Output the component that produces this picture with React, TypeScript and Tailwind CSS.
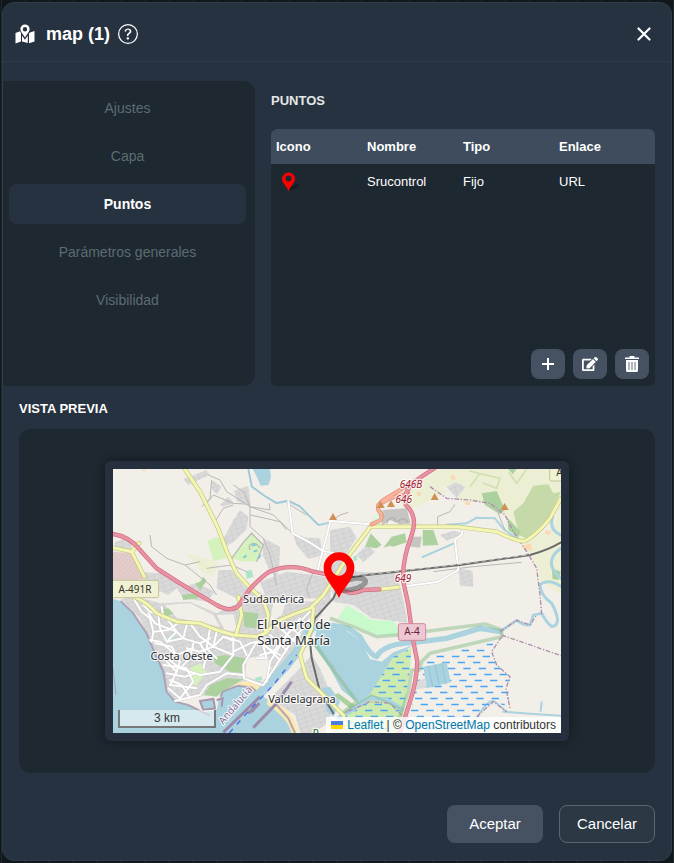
import { useState } from "react";
import { BsQuestionCircle } from "react-icons/bs";
import { FaEdit } from "react-icons/fa";

const TABS = ["Ajustes", "Capa", "Puntos", "Parámetros generales", "Visibilidad"];

const COLUMNAS = ["Icono", "Nombre", "Tipo", "Enlace"];

const PUNTOS = [{ nombre: "Srucontrol", tipo: "Fijo", enlace: "URL" }];

const ZONAS_URBANAS = [
    "M62 432L110 425 180 445 270 440 350 475 420 440 450 400 520 430 640 440 700 425 650 500 610 560 500 690 430 685 370 710 225 740 200 700 165 590 120 490Z",
    "M365 262L400 195 420 165 445 185 440 222 400 262 380 272Z",
    "M335 75L365 95 350 118 332 100Z",
    "M250 72L320 45 328 60 265 90Z",
    "M402 108L445 92 452 148 412 140Z",
    "M360 150L385 125 402 145 370 155Z",
    "M580 240L625 248 660 250 668 300 625 312 590 270Z",
    "M490 250L540 275 538 330 530 370 505 340 488 300Z",
    "M355 345L395 345 430 390 478 430 440 445 400 425 350 400Z",
    "M130 352L185 355 240 392 205 420 170 405 130 400Z",
    "M230 398L290 385 345 410 320 440 250 430Z",
    "M45 262L75 250 100 268 90 284 45 280Z",
    "M480 380L560 350 640 360 700 370 690 430 500 430Z",
    "M690 225L750 215 770 248 740 295 690 300Z",
    "M690 320L730 310 770 350 890 355 912 440 922 503 880 498 815 490 760 450 700 440Z",
    "M1020 240L1060 228 1092 235 1040 257Z",
    "M1075 340L1118 348 1120 395 1080 392Z",
    "M1040 97L1068 82 1096 97 1070 128Z",
    "M770 300L800 270 825 290 790 322Z",
    "M590 650L635 600 660 640 690 710 690 800 640 834 600 834 585 780 510 730Z",
];

const PARQUES = [
    "M175 465L205 460 220 475 200 485Z",
    "M430 470L475 475 470 520 432 515Z",
    "M340 605L375 600 437 610 432 655 390 650 345 625Z",
    "M312 720L330 690 380 670 430 672 365 712 350 725Z",
    "M285 385L300 380 310 365 320 378 300 405Z",
    "M245 420L290 415 295 430 250 435Z",
    "M795 275L812 235 845 270 830 280Z",
    "M850 278L875 245 915 235 920 262 880 275 870 272Z",
    "M968 225L1000 225 1015 270 968 272Z",
    "M1145 115L1190 108 1215 165 1200 178 1155 150Z",
    "M1222 188L1262 230 1255 248 1225 225Z",
    "M1225 42L1250 42 1238 58Z",
    "M1355 340L1383 350 1375 375 1358 372Z",
    "M700 720L715 715 770 755 750 760Z",
];

const CALLES = [
    "M565 138L578 235 625 260 668 287 700 295",
    "M690 203L668 287 652 350",
    "M690 198L810 208",
    "M895 397L1015 380 1075 345 1065 255 1086 238 1088 222",
    "M100 430L125 470 150 490 160 530 155 560",
    "M145 475L165 505 230 530 250 550 300 565 330 550",
    "M175 480L180 520 200 560 250 550 260 510",
    "M270 505L300 545 340 575 370 545 395 555",
    "M165 530L205 525 240 500",
    "M400 545L400 600 360 650 300 660 240 640 190 600",
    "M330 520L320 580 350 610",
    "M190 630L260 640 280 680 240 730 205 700",
    "M200 620L230 650 210 690 290 700",
    "M225 738L300 720 320 690 380 655 430 660",
    "M470 560L430 630 432 670 485 690",
    "M400 590L450 565 470 560 540 600",
    "M630 470L560 540 510 620 500 680",
    "M600 490L520 590 480 600",
    "M640 480L575 560 490 690",
    "M510 540L560 585",
    "M485 560L540 615",
    "M530 510L585 560",
    "M550 500L600 540",
    "M480 540L500 610 470 610",
    "M150 555L180 560 230 600 280 580",
    "M205 555L230 530 200 490",
    "M165 565L215 575 240 620 230 650",
    "M280 565L270 610 240 640",
    "M300 565L320 600 310 640",
    "M340 575L300 590 260 580",
    "M190 490L185 455",
    "M350 530L340 575 400 600",
    "M200 655L255 665 285 655",
    "M210 675L245 690 270 730",
    "M370 545L420 560 440 600",
    "M130 450L150 470 190 480",
];

const SENDEROS = [
    "M150 240L155 275 200 310 255 330 300 320",
    "M325 60L360 75 380 110 450 155 520 180 578 235",
    "M320 145L340 120 400 145 450 148",
    "M400 90L430 110 450 155 510 165 508 145",
    "M450 155L450 215 490 250 510 300 530 390",
    "M452 180L540 200 560 225",
    "M345 200L370 160 400 150",
    "M570 150L620 180",
    "M690 200L720 180 745 172",
    "M1013 210L1013 185 1050 170 1065 148",
    "M1185 145L1200 190 1215 225",
    "M1000 350L1120 335 1265 322",
    "M255 330L330 390 350 420",
    "M305 155L330 130 335 75",
    "M320 340L395 330 440 350",
    "M640 350L620 400 630 430",
    "M690 620L740 705",
];

const CARRETERAS = [
    "M250 36L300 110 350 210 385 300 410 355 450 398 490 435 505 480 495 535",
    "M39 278L95 290 118 264",
    "M95 290L133 365",
    "M100 425Q140 440 170 475L230 500 300 505 350 525 400 540 470 545 500 532 530 500 580 478 630 460 670 420 715 350 740 310 812 215 930 215 1070 215 1190 230Q1255 262 1275 258 1310 240 1350 190L1383 130",
    "M415 425L425 480 408 540",
    "M640 460L635 520 600 600 620 670 680 730 730 780 745 834",
    "M838 403L895 397",
];

const AUTOVIAS = [
    "M39 237Q90 245 120 285L170 340 240 385 350 450Q405 480 425 438L450 402Q480 370 505 352 570 322 640 350L700 362 720 400Q750 425 790 405L838 403",
    "M1005 38L950 75Q905 110 918 150 955 185 935 240 905 320 910 380L925 450 940 560 952 620Q950 680 930 740L900 834",
];

const MONTES = [[699, 185], [842, 149], [873, 146], [1004, 125], [1214, 155]];

const FILAS_MARISMA = Array.from({ length: 16 }, (_, i) => ({ y: 568.5 + i * 18, salto: (i * 29) % 46 }));

// Drawing units are a third of a CSS pixel.
function Mapa() {
    return (
        <svg viewBox="39 42 1344 792" className="block h-auto w-full" role="img" aria-label="Mapa">
            <defs>
                <pattern id="manzanas" width="20" height="14" patternUnits="userSpaceOnUse" patternTransform="rotate(-18)">
                    <rect width="20" height="14" fill="#dad9d9" />
                    <path d="M0 0H20M0 0V14" stroke="#c3c2c2" strokeWidth="2" />
                </pattern>
                <clipPath id="marisma">
                    <path d="M935 578L880 605 812 715 740 775 700 834H890L915 740 930 640ZM970 610L1180 562 1175 590 1190 630 1230 665 1225 760 1190 740 1130 790 1100 834H910L940 740 955 650Z" />
                </clipPath>
                <pattern id="militar" width="10" height="10" patternUnits="userSpaceOnUse" patternTransform="rotate(45)">
                    <rect width="10" height="10" fill="#e3cdcb" />
                    <path d="M0 0V10" stroke="#d6bcbc" strokeWidth="3" />
                </pattern>
            </defs>
            <rect x="39" y="42" width="1344" height="792" fill="#f2efe9" />

            <g fill="#ecefd3">
                <path d="M1000 42H1383V160L1290 250 1262 256 1215 180 1150 145 1085 140 1040 97 990 90Z" />
                <path d="M890 130L990 62 1042 112 920 168 905 150Z" />
                <path d="M1268 262L1350 225 1383 160V420L1322 380 1310 330Z" />
                <path d="M252 292L355 322 340 366 305 350Z" />
            </g>
            <path d="M1258 240L1240 170 1270 145 1300 92 1345 88 1360 115 1383 110 1345 190 1280 252Z" fill="#c5daa8" />
            <path d="M1108 48L1200 70 1190 100 1150 85M1225 50L1250 85 1280 42M1140 55L1110 95" fill="none" stroke="#d2dfb2" strokeWidth="5" />
            <path d="M1052 62L1062 58 1068 72 1056 76ZM1095 140H1110V150H1095ZM1335 225L1352 228 1350 240 1336 236ZM950 112L964 110 962 124 952 122ZM1266 272L1292 265 1298 285 1275 288ZM122 44L140 42 134 50Z" fill="#fbd9b6" />
            <path d="M39 290L95 295 132 368 100 395 39 400Z" fill="url(#militar)" />
            <path d="M322 258L350 245 372 262 378 310 340 318ZM395 310L430 262 455 232 488 268 470 318 430 320Z" fill="#d5f2bd" />
            <path d="M812 205L835 165 850 195 840 208Z" fill="#dbf7e0" />

            <g fill="url(#manzanas)">
                {ZONAS_URBANAS.map((d) => <path key={d} d={d} />)}
            </g>
            <g fill="#f2efe9">
                <path d="M195 450L270 445 340 480 360 515 290 500 230 488Z" />
                <path d="M440 610L500 600 515 640 490 680 436 665Z" />
                <path d="M350 480L400 478 412 530 375 525Z" />
                <path d="M520 440L560 435 545 480 510 500Z" />
                <path d="M655 620L690 640 725 700 690 700Z" />
            </g>
            <path d="M848 165L920 160 932 205 900 208 870 195 845 212ZM935 245L965 245 960 278 920 274Z" fill="#c6c5c4" />
            <path d="M860 205C865 185 885 185 888 200M895 203C900 185 920 190 925 205" fill="none" stroke="#b0afae" strokeWidth="4" />

            <g fill="#add19e">
                {PARQUES.map((d) => <path key={d} d={d} />)}
            </g>
            <path d="M270 640L300 625 320 650 290 690 272 690Z" fill="#d5f2bd" />
            <path d="M740 450L815 495 880 498 905 540 830 538 714 490Z" fill="#c8facc" />
            <path d="M437 348L455 345 460 365 440 372ZM205 545L220 543 222 555 208 558ZM760 305L770 300 772 315 760 318ZM465 668L485 664 488 675 468 678Z" fill="#aee4c8" />

            <g fill="#aad3df">
                <path d="M39 432L62 438 100 475 140 535 165 595 190 650 200 710 225 740 265 750 310 772 350 765 362 715 415 692 455 697 485 722 530 750 565 790 585 834H39Z" />
                <path d="M458 42H510L513 68 505 90 482 92 472 68Z" />
                <path d="M650 525L690 518 735 525 780 555 810 612 845 620 880 592 940 570 880 610 815 715 775 745 725 705 690 640 640 570Z" />
                <path d="M664 700L690 695 720 740 700 785 680 770Z" />
            </g>
            <path d="M400 692Q440 665 490 690L478 718Q440 690 400 692ZM505 728L560 765Q592 800 594 834H574Q565 790 500 748Z" fill="#fbe9b4" />
            <path d="M300 738L340 732 345 760 310 765ZM350 735L368 730 365 755" fill="#aad3df" stroke="#a894ab" strokeWidth="6" />
            <path d="M62 438L100 475 140 535 165 595 190 650 200 710 225 740 265 750 330 782M362 725L368 710 415 692 455 697 485 722M530 750L565 790 585 834" fill="none" stroke="#a894ab" strokeWidth="6" strokeOpacity="0.8" />
            <path d="M39 640L48 720" stroke="#a9a1c0" strokeWidth="3" />

            <g fill="none" stroke="#aad3df" strokeLinejoin="round" strokeLinecap="round">
                <path d="M425 790L480 715 560 630 610 565 635 510" strokeWidth="28" />
                <path d="M640 520L700 512 745 520 780 545Q810 600 830 605 850 565 945 562L1040 550 1140 520 1200 530" strokeWidth="16" />
                <path d="M1200 530L1250 496Q1272 512 1290 510L1300 480 1325 475" strokeWidth="8" />
                <path d="M445 42L455 95 490 120 530 145 565 138 600 155 655 210 690 203M1040 209L1100 205 1130 188 1185 190 1210 222 1250 250M968 306L1060 266M1210 770L1270 775 1383 782M1325 742L1322 768M1130 790Q1170 720 1190 745L1220 770" strokeWidth="6" />
                <path d="M1358 185Q1345 225 1383 240M1383 280Q1325 320 1383 370M1383 395Q1350 370 1320 388 1320 420 1355 445 1390 510 1355 515 1338 500 1325 475" strokeWidth="9" />
            </g>
            <path d="M445 45L457 95 492 122 530 143 565 136 600 153 655 208" fill="none" stroke="#8fb8c9" strokeWidth="2" />

            <path d="M935 578L880 605 812 715 740 775 700 834H900L915 740 930 640Z" fill="#cdebb0" />
            <g clipPath="url(#marisma)" stroke="#4aa3f5" strokeWidth="4" strokeDasharray="22 24">
                {FILAS_MARISMA.map(({ y, salto }) => (
                    <path key={y} d={`M700 ${y}H1240`} strokeDashoffset={salto} />
                ))}
            </g>
            <path d="M970 635L1040 622 1052 682 980 700Z" fill="#aad3df" />
            <path d="M945 680L975 670 978 698 940 705Z" fill="#dcdbdb" />
            <path d="M985 633L998 697M1005 628L1018 692M1025 625L1038 688" stroke="#93c5d5" strokeWidth="3" />
            <path d="M710 795L810 728 860 735 910 765" fill="none" stroke="#aad3df" strokeWidth="14" />

            <g fill="none" stroke="#7fb77f" strokeOpacity="0.45" strokeWidth="11" strokeLinejoin="round">
                <path d="M690 490L760 515 830 545 890 540 1155 507 1205 525 1205 545 990 595 965 620 958 645H935L925 710 900 785 890 834" />
                <path d="M640 560L700 645 770 740 720 780" />
                <path d="M735 770L815 720 900 760" strokeWidth="5" />
            </g>
            <path d="M370 832L480 725M445 775L478 745 455 770M460 818L525 750 575 680" fill="none" stroke="#9c8bab" strokeWidth="9" />
            <path d="M388 834L440 775 520 690 590 600" fill="none" stroke="#4d6df0" strokeWidth="4" strokeDasharray="16 18" />

            <g fill="none" stroke="#b08fae" strokeWidth="4" strokeDasharray="14 5 4 5">
                <path d="M990 95L1040 130 1110 135 1170 145 1215 180 1240 230 1280 290 1310 340 1320 420 1325 480" />
                <path d="M1205 540L1383 602M1205 545L1175 590 1190 630 1230 665 1218 700 1230 760M720 780L810 740 870 745 905 780M1200 530L1250 496 1290 510 1310 480M1130 785L1180 740 1220 770" />
            </g>

            <g fill="none" stroke="#bab9b8" strokeWidth="3">
                {SENDEROS.map((d) => <path key={d} d={d} />)}
            </g>
            <path d="M395 310L430 262 455 235 490 270 470 320M450 285C440 260 470 260 480 280" fill="none" stroke="#bab9b8" strokeWidth="4" />
            <path d="M455 272L470 268M430 308L440 302M460 290L472 286M475 310L482 300" stroke="#80c8d8" strokeWidth="6" />

            <g fill="none" strokeLinejoin="round" strokeLinecap="round">
                <g stroke="#c9c8c8" strokeWidth="8">
                    {CALLES.map((d) => <path key={d} d={d} />)}
                </g>
                <g stroke="#ffffff" strokeWidth="6">
                    {CALLES.map((d) => <path key={d} d={d} />)}
                </g>
                <path d="M730 370L800 360 1080 330 1290 300Q1345 285 1383 262M725 375L700 430 645 490 628 540 635 610 660 710 700 775" stroke="#6b6b6b" strokeWidth="6" />
                <path d="M740 366L1080 328 1290 299" stroke="#e8e6e4" strokeWidth="2" strokeDasharray="14 10" strokeLinecap="butt" />
                <g stroke="#c3c67e" strokeWidth="13">
                    {CARRETERAS.map((d) => <path key={d} d={d} />)}
                </g>
                <g stroke="#f4f7b4" strokeWidth="9">
                    {CARRETERAS.map((d) => <path key={d} d={d} />)}
                </g>
                <path d="M815 208L842 195Q850 180 835 165 830 150 850 135L900 105 940 80M835 150L870 130 925 115" stroke="#e08a6c" strokeWidth="12" />
                <path d="M815 208L842 195Q850 180 835 165 830 150 850 135L900 105 940 80M835 150L870 130 925 115" stroke="#fab29c" strokeWidth="8" />
                <g stroke="#cf6e85" strokeWidth="13">
                    {AUTOVIAS.map((d) => <path key={d} d={d} />)}
                </g>
                <g stroke="#e892a2" strokeWidth="9">
                    {AUTOVIAS.map((d) => <path key={d} d={d} />)}
                </g>
            </g>
            <g fill="#d08f55">
                {MONTES.map(([x, y]) => <path key={x} d={`M${x - 12} ${y + 10}L${x} ${y - 11}L${x + 12} ${y + 10}Z`} />)}
            </g>

            <g strokeWidth="3">
                <rect x="20" y="376" width="156" height="52" rx="6" fill="#f1f2d3" stroke="#c3c49a" />
                <rect x="1349" y="20" width="60" height="58" rx="6" fill="#f1f2d3" stroke="#c3c49a" />
                <rect x="895" y="506" width="82" height="50" rx="6" fill="#edc8d2" stroke="#cf8a9b" />
            </g>
            <g className="font-['Noto_Sans',sans-serif]" textAnchor="middle" fill="#35352f" fontSize="30">
                <text x="105" y="413">A-491R</text>
                <text x="1378" y="64">A</text>
                <text x="936" y="541" fill="#6b1d3a">A-4</text>
                <g stroke="#ffffff" strokeOpacity="0.75" strokeWidth="7" strokeLinejoin="round" paintOrder="stroke" fill="#2d2d2d">
                    <text x="521" y="444" fontSize="33">Sudamérica</text>
                    <text x="581" y="521" fontSize="39">El Puerto de</text>
                    <text x="581" y="570" fontSize="39">Santa María</text>
                    <text x="245" y="614" fontSize="33">Costa Oeste</text>
                    <text x="606" y="743" fontSize="33">Valdelagrana</text>
                    <text x="647" y="846" fill="#1b6b1b" fontSize="30">P</text>
                    <g fill="#a3202f" fontStyle="italic" fontSize="30">
                        <text x="933" y="99">646B</text>
                        <text x="911" y="143">646</text>
                        <text x="909" y="382">649</text>
                    </g>
                    <text transform="translate(414 757) rotate(-50)" fill="#8c7099" fontSize="30">Andalucía</text>
                </g>
            </g>

            <ellipse cx="755" cy="388" rx="43" ry="15" fill="none" stroke="#000000" strokeOpacity="0.3" strokeWidth="15" transform="rotate(-14 755 388)" />
            <path fillRule="evenodd" fill="#ff0000" d="M717 429C703 395 671 375 671 338A46 46 0 0 1 763 338C763 375 731 395 717 429ZM717 316A23 23 0 1 0 717 362A23 23 0 1 0 717 316Z" />
        </svg>
    );
}

function IconoMapa() {
    return (
        <svg width="20" height="20" viewBox="0 0 20 20" fill="currentColor" className="shrink-0" aria-hidden="true">
            <path fillRule="evenodd" d="M10 0.500A4.600 4.600 0 0 1 14.600 5.100C14.600 8 12 10 10 13.500C8 10 5.400 8 5.400 5.100A4.600 4.600 0 0 1 10 0.500ZM10 3A2.200 2.200 0 1 0 10 7.400A2.200 2.200 0 1 0 10 3Z" />
            <path d="M0.500 9L5 7.200 6 9V17.500L0.500 19.500ZM7 11.500L9.900 15.800 12.800 11.500V19L7 17.500ZM14 9.500L15 8.500 19.500 7V17.500L14 19.300Z" />
        </svg>
    );
}

function IconoPapelera() {
    return (
        <svg width="14" height="16" viewBox="0 0 14 16" aria-hidden="true">
            <path fill="currentColor" d="M4.500 0H9.500V1.500H14V3H0V1.500H4.500ZM1 4H13V14.500A1.500 1.500 0 0 1 11.500 16H2.500A1.500 1.500 0 0 1 1 14.500Z" />
            <path stroke="#939ca6" strokeWidth="1.500" d="M4 6V14M7 6V14M10 6V14" />
        </svg>
    );
}

function IconoPunto() {
    return (
        <svg width="24" height="22" viewBox="0 0 24 22" aria-hidden="true">
            <path d="M7 20C11 14 18 12 18 14S13 18 7 20Z" fill="#141b21" />
            <path fillRule="evenodd" fill="#ff0000" d="M7.500 20.500C6 15 1 12 1 8A6.500 6.500 0 0 1 14 8C14 12 9 15 7.500 20.500ZM7.500 4.500A3 3 0 1 0 7.500 10.500A3 3 0 1 0 7.500 4.500Z" />
        </svg>
    );
}

export default function App() {
    const [tab, setTab] = useState("Puntos");

    return (
        <div className="min-h-screen bg-[#11181c] bg-[repeating-linear-gradient(90deg,transparent_0_1px,#20282d_1px_2px,transparent_2px_24px)] p-[2px] pb-[3px] font-['Liberation_Sans',Arial,sans-serif] text-white">
            <div role="dialog" aria-labelledby="titulo" className="rounded-xl border border-[#303c4a] bg-[#273240]">
                <header className="flex h-[59px] items-center border-b border-[#2f3b49] pt-[3px] pr-5 pl-3">
                    <IconoMapa />
                    <h1 id="titulo" className="ml-[11px] text-lg leading-6 font-bold">map (1)</h1>
                    <button type="button" aria-label="Ayuda" className="ml-2"><BsQuestionCircle className="size-5" /></button>
                    <button type="button" aria-label="Cerrar" className="ml-auto">
                        <svg width="14" height="14" viewBox="0 0 14 14" stroke="currentColor" strokeWidth="2.200" strokeLinecap="round">
                            <path d="M1.500 1.500L12.500 12.500M12.500 1.500L1.500 12.500" />
                        </svg>
                    </button>
                </header>

                <div className="mt-[19px] flex min-h-[305px] gap-4 pr-4">
                    <nav className="flex w-[252px] shrink-0 flex-col gap-2 rounded-r-xl bg-[#1e2830] py-[7px] pr-[9px] pl-[6px]">
                        {TABS.map((nombre) => (
                            <button
                                key={nombre}
                                type="button"
                                onClick={() => setTab(nombre)}
                                className={`h-10 rounded-lg text-sm ${nombre === tab ? "bg-[#273240] font-bold text-white" : "text-[#5d6b74]"}`}
                            >
                                {nombre}
                            </button>
                        ))}
                    </nav>

                    <section className="flex min-w-0 flex-1 flex-col">
                        <h2 className="pt-3 text-[13px] leading-4 font-bold text-[#e4e6e8]">PUNTOS</h2>
                        <div className="mt-5 flex flex-1 flex-col overflow-hidden rounded-md bg-[#1e2830]">
                            <table className="w-full table-fixed text-left text-[13px]">
                                <thead className="bg-[#3e4c5e]">
                                    <tr className="h-[35px]">
                                        {COLUMNAS.map((columna) => (
                                            <th key={columna} className="font-bold first:pl-[5px]">{columna}</th>
                                        ))}
                                    </tr>
                                </thead>
                                <tbody>
                                    {PUNTOS.map((punto) => (
                                        <tr key={punto.nombre} className="h-[35px]">
                                            <td className="pl-[10px]"><IconoPunto /></td>
                                            <td>{punto.nombre}</td>
                                            <td>{punto.tipo}</td>
                                            <td>{punto.enlace}</td>
                                        </tr>
                                    ))}
                                </tbody>
                            </table>
                            <div className="mt-auto flex justify-end gap-2 p-[6px] pb-[7px]">
                                <button type="button" aria-label="Añadir" className="flex h-[30px] w-[34px] items-center justify-center rounded-lg bg-[#465262]">
                                    <svg width="12" height="12" viewBox="0 0 12 12" stroke="currentColor" strokeWidth="2">
                                        <path d="M6 0V12M0 6H12" />
                                    </svg>
                                </button>
                                <button type="button" aria-label="Editar" className="flex h-[30px] w-[34px] items-center justify-center rounded-lg bg-[#465262]"><FaEdit className="size-4" /></button>
                                <button type="button" aria-label="Eliminar" className="flex h-[30px] w-[34px] items-center justify-center rounded-lg bg-[#465262]"><IconoPapelera /></button>
                            </div>
                        </div>
                    </section>
                </div>

                <section className="px-4 pt-[15px]">
                    <h2 className="text-[13px] leading-4 font-bold">VISTA PREVIA</h2>
                    <div className="mt-3 flex justify-center rounded-xl bg-[#1e2830] py-8">
                        <div className="w-full max-w-[464px] rounded-md bg-[#252f3d] p-2 shadow-[0_0_12px_rgba(0,0,0,0.4)]">
                            <div className="relative overflow-hidden text-xs text-[#333]">
                                <Mapa />
                                <div className="absolute bottom-[5px] left-[5px] h-[18px] w-[98px] border-2 border-t-0 border-[#777] bg-white/50 text-center leading-4">3 km</div>
                                <div className="absolute right-0 bottom-0 flex h-4 items-center bg-white/80 px-[5px] whitespace-pre">
                                    <svg width="12" height="8" viewBox="0 0 12 8" className="mr-1" aria-hidden="true">
                                        <path fill="#4c7be1" d="M0 0h12v4H0z" />
                                        <path fill="#ffd500" d="M0 4h12v4H0z" />
                                    </svg>
                                    <a href="#leaflet" className="text-[#0078a8]">Leaflet</a> | © <a href="#openstreetmap" className="text-[#0078a8]">OpenStreetMap</a> contributors
                                </div>
                            </div>
                        </div>
                    </div>
                </section>

                <footer className="flex justify-end gap-4 px-4 pt-8 pb-[17px] text-[15px]">
                    <button type="button" className="h-[38px] w-24 rounded-lg bg-[#465262]">Aceptar</button>
                    <button type="button" className="h-[38px] w-24 rounded-lg border border-[#566874] bg-[#2c3945]">Cancelar</button>
                </footer>
            </div>
        </div>
    );
}
